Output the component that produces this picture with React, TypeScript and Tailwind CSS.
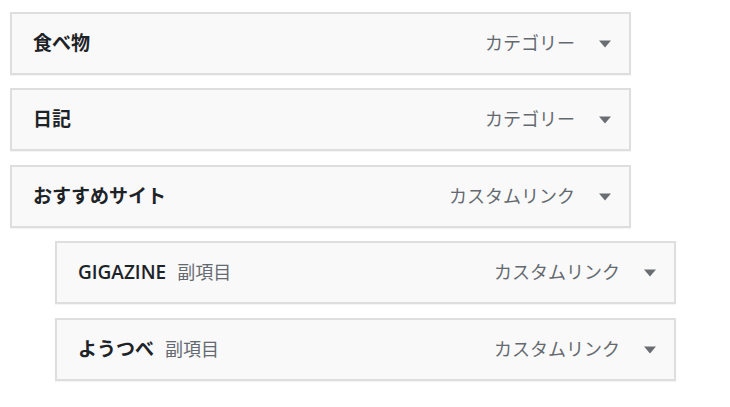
import React from "react";

type Item = { title: string; type: string; sub?: boolean; mt: string; weight: string };

const items: Item[] = [
  { title: "食べ物", type: "カテゴリー", mt: "mt-[12px]", weight: "font-bold" },
  { title: "日記", type: "カテゴリー", mt: "mt-[13px]", weight: "font-bold" },
  { title: "おすすめサイト", type: "カスタムリンク", mt: "mt-[14px]", weight: "font-bold" },
  { title: "GIGAZINE", type: "カスタムリンク", sub: true, mt: "mt-[13px]", weight: "font-semibold" },
  { title: "ようつべ", type: "カスタムリンク", sub: true, mt: "mt-[14px]", weight: "font-bold" },
];

function Arrow() {
  return (
    <svg width="12" height="8" viewBox="0 0 12 8" className="shrink-0">
      <path d="M0 0.5 L12 0.5 L6 7.5 Z" fill="#6a6e73" />
    </svg>
  );
}

export default function App() {
  return (
    <div
      className="w-[730px] h-[407px] bg-white overflow-hidden"
      style={{ fontFamily: '"Open Sans", "Noto Sans CJK JP", sans-serif' }}
    >
      {items.map((it, i) => (
        <div
          key={i}
          className={`${it.mt} ${it.sub ? "ml-[55px]" : "ml-[10px]"} w-[621px] h-[63px] border-2 border-[#dedede] bg-[#f9f9f9] shadow-[0_1px_1px_rgba(0,0,0,0.04)] flex items-center pl-[21px] pr-[18px]`}
        >
          <div className="flex-1 flex items-baseline">
            <span className={`text-[19px] ${it.weight} text-[#1d2327]`}>{it.title}</span>
            {it.sub && (
              <span className="ml-[11px] text-[18px] text-[#646970]">副項目</span>
            )}
          </div>
          <span className="text-[18px] text-[#646970]">{it.type}</span>
          <span className="ml-[24px] flex items-center">
            <Arrow />
          </span>
        </div>
      ))}
    </div>
  );
}
